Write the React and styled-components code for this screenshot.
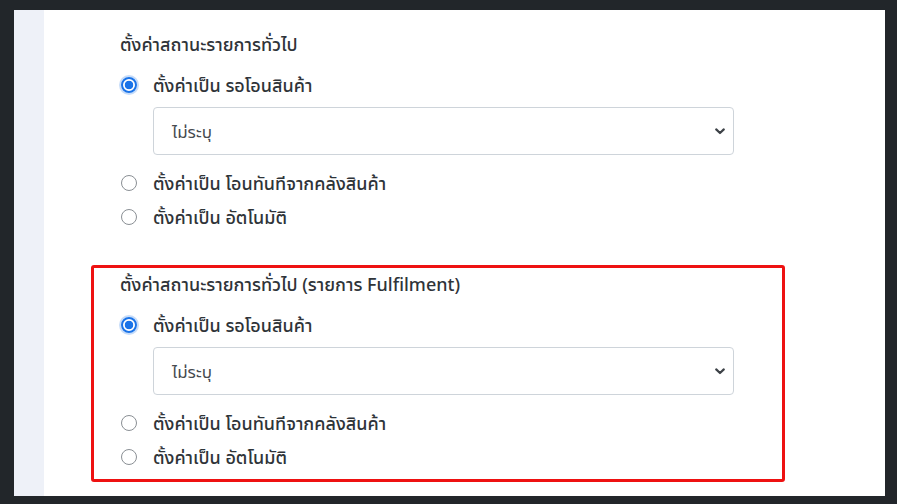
import React from "react";
import styled, { createGlobalStyle } from "styled-components";

const Global = createGlobalStyle`
  html, body { margin: 0; padding: 0; background: #22262a; }
  body {
    font-family: "Noto Sans", "Noto Sans Thai UI", "Noto Sans Thai", "Leelawadee UI", "Tahoma", sans-serif;
    color: #2b3035;
  }
`;

const Frame = styled.div`
  margin: 10px 0 0 14px;
  width: 871px;
  height: 486px;
  display: flex;
  background: #ffffff;
  overflow: hidden;
`;

const SideStrip = styled.div`
  width: 30px;
  flex-shrink: 0;
  background: #eef1f8;
`;

const Content = styled.div`
  flex: 1;
  padding: 15px 0 0 47px;
  display: flex;
  flex-direction: column;
  gap: 23px;
`;

const Section = styled.div`
  width: 694px;
  box-sizing: border-box;
  padding: 4px 0 10px 26px;
  border: 3px solid ${(p) => (p.$highlight ? "#ee1111" : "transparent")};
  border-radius: 3px;
  display: flex;
  flex-direction: column;
`;

const Heading = styled.div`
  font-size: 18px;
  line-height: 24px;
  font-weight: 500;
  color: #2f3439;
  white-space: nowrap;
`;

const RadioRow = styled.label`
  display: flex;
  align-items: center;
  gap: 16px;
  height: 24px;
  margin-top: ${(p) => p.$mt}px;
  margin-left: 1px;
  font-size: 18px;
  font-weight: 500;
  color: #2f3439;
  white-space: nowrap;
`;

const RadioDot = styled.span`
  width: 16px;
  height: 16px;
  box-sizing: border-box;
  border-radius: 50%;
  flex-shrink: 0;
  border: ${(p) => (p.$checked ? "2px solid #1a73e8" : "1px solid #8a8f94")};
  background: ${(p) =>
    p.$checked ? "radial-gradient(circle, #1a73e8 0 4px, #ffffff 4.6px)" : "#fff"};
  box-shadow: ${(p) => (p.$checked ? "0 0 0 2px rgba(26,115,232,0.25)" : "none")};
`;

const SelectBox = styled.div`
  margin: 10px 0 0 33px;
  width: 581px;
  height: 48px;
  box-sizing: border-box;
  border: 1px solid #ced4da;
  border-radius: 4px;
  display: flex;
  align-items: center;
  justify-content: space-between;
  padding: 0 7px 0 18px;
  font-size: 17px;
  color: #464b50;
`;

const Chevron = () => (
  <svg width="12" height="10" viewBox="0 0 12 10">
    <path d="M2.2 3.4 L6 7 L9.8 3.4" fill="none" stroke="#3d4247" strokeWidth="2.2" strokeLinecap="round" strokeLinejoin="round" />
  </svg>
);

const StatusSection = ({ title, highlight }) => (
  <Section $highlight={highlight}>
    <Heading>{title}</Heading>
    <RadioRow $mt={17}>
      <RadioDot $checked />
      ตั้งค่าเป็น รอโอนสินค้า
    </RadioRow>
    <SelectBox>
      <span>ไม่ระบุ</span>
      <Chevron />
    </SelectBox>
    <RadioRow $mt={16}>
      <RadioDot />
      ตั้งค่าเป็น โอนทันทีจากคลังสินค้า
    </RadioRow>
    <RadioRow $mt={10}>
      <RadioDot />
      ตั้งค่าเป็น อัตโนมัติ
    </RadioRow>
  </Section>
);

export default function App() {
  return (
    <>
      <Global />
      <Frame>
        <SideStrip />
        <Content>
          <StatusSection title="ตั้งค่าสถานะรายการทั่วไป" />
          <StatusSection title="ตั้งค่าสถานะรายการทั่วไป (รายการ Fulfilment)" highlight />
        </Content>
      </Frame>
    </>
  );
}
